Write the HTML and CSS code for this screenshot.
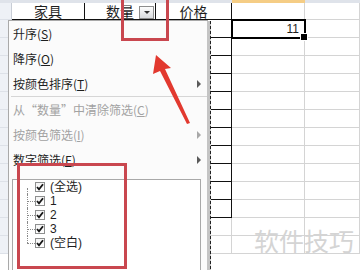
FILE: index.html
```html
<!DOCTYPE html>
<html lang="zh-CN">
<head>
    <meta charset="UTF-8">
    <meta name="viewport" content="width=device-width, initial-scale=1.0">
    <title>筛选</title>
    <link rel="stylesheet" href="styles.css">
</head>
<body>

    <div class="sheet">
        <div class="grid">
            <div class="band"></div><div class="band"></div><div class="band"></div><div class="band"></div><div class="band sel"></div><div class="band"></div>
            <div class="rh"></div><div class="k hd">家具</div><div class="k hd hd-filter">数量<span class="dd"></span></div><div class="k hd">价格</div><div class="g"></div><div class="g"></div>
            <div class="rh"></div><div class="k"></div><div class="k"></div><div class="k"></div><div class="g cur">11</div><div class="g"></div>
            <div class="rh"></div><div class="k"></div><div class="k"></div><div class="k"></div><div class="g"></div><div class="g"></div>
            <div class="rh"></div><div class="k"></div><div class="k"></div><div class="k"></div><div class="g"></div><div class="g"></div>
            <div class="rh"></div><div class="k"></div><div class="k"></div><div class="k"></div><div class="g"></div><div class="g"></div>
            <div class="rh"></div><div class="k"></div><div class="k"></div><div class="k"></div><div class="g"></div><div class="g"></div>
            <div class="rh"></div><div class="k"></div><div class="k"></div><div class="k"></div><div class="g"></div><div class="g"></div>
            <div class="rh"></div><div class="k"></div><div class="k"></div><div class="k"></div><div class="g"></div><div class="g"></div>
            <div class="rh"></div><div class="k"></div><div class="k"></div><div class="k"></div><div class="g"></div><div class="g"></div>
            <div class="rh"></div><div class="k"></div><div class="k"></div><div class="k"></div><div class="g"></div><div class="g"></div>
            <div class="rh"></div><div class="k"></div><div class="k"></div><div class="k"></div><div class="g"></div><div class="g"></div>
            <div class="rh"></div><div class="k"></div><div class="k"></div><div class="k"></div><div class="g"></div><div class="g"></div>
            <div class="rh"></div><div class="g"></div><div class="g"></div><div class="g"></div><div class="g"></div><div class="g"></div>
            <div class="rh"></div><div class="g"></div><div class="g"></div><div class="g"></div><div class="g"></div><div class="g"></div>
        </div>

        <!-- filter dropdown -->
        <div class="menu">
            <div class="item">升序(<u>S</u>)</div>
            <div class="item">降序(<u>O</u>)</div>
            <div class="item sub">按颜色排序(<u>T</u>)</div>
            <div class="sep"></div>
            <div class="item off">从“数量”中清除筛选(<u>C</u>)</div>
            <div class="item off sub">按颜色筛选(<u>I</u>)</div>
            <div class="item sub">数字筛选(<u>F</u>)</div>

            <div class="list">
                <div class="row"><span class="branch first"></span><span class="cb"><svg width="8" height="8" viewBox="0 0 8 8"><path d="M1 4 L3 6.3 L7 1.2" fill="none" stroke="#151515" stroke-width="1.8"/></svg></span><span class="lbl">(全选)</span></div>
                <div class="row"><span class="branch"></span><span class="cb"><svg width="8" height="8" viewBox="0 0 8 8"><path d="M1 4 L3 6.3 L7 1.2" fill="none" stroke="#151515" stroke-width="1.8"/></svg></span><span class="lbl">1</span></div>
                <div class="row"><span class="branch"></span><span class="cb"><svg width="8" height="8" viewBox="0 0 8 8"><path d="M1 4 L3 6.3 L7 1.2" fill="none" stroke="#151515" stroke-width="1.8"/></svg></span><span class="lbl">2</span></div>
                <div class="row"><span class="branch"></span><span class="cb"><svg width="8" height="8" viewBox="0 0 8 8"><path d="M1 4 L3 6.3 L7 1.2" fill="none" stroke="#151515" stroke-width="1.8"/></svg></span><span class="lbl">3</span></div>
                <div class="row"><span class="branch last"></span><span class="cb"><svg width="8" height="8" viewBox="0 0 8 8"><path d="M1 4 L3 6.3 L7 1.2" fill="none" stroke="#151515" stroke-width="1.8"/></svg></span><span class="lbl">(空白)</span></div>
            </div>
        </div>

        <!-- annotations -->
        <div class="mark mark-btn"></div>
        <div class="mark mark-list"></div>
        <svg class="arrow" width="360" height="270" viewBox="0 0 360 270">
            <polygon points="156,55 171,68 165,69 190,123 187,124 160,71 153,74" fill="#e2392f"/>
        </svg>
        <div class="watermark">软件技巧</div>
    </div>

</body>
</html>
```

FILE: styles.css
```css
* {
    margin: 0;
    padding: 0;
    box-sizing: border-box;
}

body {
    width: 360px;
    height: 270px;
    overflow: hidden;
    background: #fff;
    color: #1e1e1e;
    font-family: "Noto Sans CJK SC", sans-serif;
}

.sheet {
    position: relative;
    width: 360px;
    height: 270px;
}

/* Spreadsheet grid */
.grid {
    display: grid;
    grid-template-columns: 12px 73px 71px 76px 73px 55px;
    grid-template-rows: 3px 17px;
    grid-auto-rows: 18px;
}

.band {
    background: #dfe3ea;
}

.band.sel {
    background: #f5cd85;
}

.rh {
    background: #eef1f6;
    border-right: 1px solid #c8cdd6;
    border-bottom: 1px solid #dde1e8;
}

.g {
    border-right: 1px solid #d4d4d4;
    border-bottom: 1px solid #d4d4d4;
}

.k {
    border-right: 1px solid #111;
    border-bottom: 1px solid #111;
}

.hd {
    display: flex;
    align-items: center;
    justify-content: center;
    font-size: 14px;
    line-height: 16px;
}

.hd-filter {
    position: relative;
}

.dd {
    position: absolute;
    right: 1px;
    top: 3px;
    width: 15px;
    height: 13px;
    border: 1px solid #8d8d8d;
    background: linear-gradient(#fdfdfd, #d9dbde);
    display: flex;
    align-items: center;
    justify-content: center;
}

.dd::after {
    content: "";
    border-left: 3px solid transparent;
    border-right: 3px solid transparent;
    border-top: 3px solid #333;
}

.cur {
    position: relative;
    z-index: 1;
    outline: 2px solid #000;
    outline-offset: -1px;
    display: flex;
    align-items: center;
    justify-content: flex-end;
    padding-right: 5px;
    font: 12px "Liberation Sans", sans-serif;
}

.cur::after {
    content: "";
    position: absolute;
    right: -4px;
    bottom: -4px;
    width: 6px;
    height: 6px;
    background: #000;
    border: 1px solid #fff;
}

/* Filter menu */
.menu {
    position: absolute;
    z-index: 2;
    left: 8px;
    top: 20px;
    width: 200px;
    height: 260px;
    background: #fbfbfb;
    border: 1px solid #a9a9a9;
    font-size: 12px;
}

.menu::after {
    content: "";
    position: absolute;
    top: 0;
    bottom: 0;
    right: -4px;
    width: 3px;
    background: #c4c4c4;
    border-right: 1px dashed #222;
}

.item {
    position: relative;
    display: flex;
    align-items: center;
    height: 25px;
    padding-left: 4px;
    line-height: 14px;
    white-space: nowrap;
}

.item.off {
    color: #a2a2a2;
}

.sub::after {
    content: "";
    position: absolute;
    right: 6px;
    top: 50%;
    margin-top: -4px;
    border-top: 4px solid transparent;
    border-bottom: 4px solid transparent;
    border-left: 4px solid #5a5a5a;
}

.off.sub::after {
    border-left-color: #a8a8a8;
}

.sep {
    height: 1px;
    margin-left: 2px;
    background: #d6d6d6;
}

/* Value list */
.list {
    margin: 7px 6px 0 3px;
    height: 100px;
    border: 1px solid #a8a8a8;
    background: #fff;
    padding-left: 14px;
    font-family: "Liberation Sans", "Noto Sans CJK SC", sans-serif;
}

.row {
    display: flex;
    align-items: center;
    height: 14px;
}

.branch {
    position: relative;
    flex: none;
    width: 8px;
    height: 14px;
}

.branch::before {
    content: "";
    position: absolute;
    left: 0;
    top: 0;
    bottom: 0;
    border-left: 1px dotted #8a8a8a;
}

.branch::after {
    content: "";
    position: absolute;
    left: 0;
    right: 0;
    top: 7px;
    border-top: 1px dotted #8a8a8a;
}

.branch.first::before {
    top: 8px;
}

.branch.first::after {
    display: none;
}

.branch.last::before {
    bottom: 7px;
}

.cb {
    flex: none;
    width: 10px;
    height: 10px;
    border: 1px solid #8e8f8f;
    background: linear-gradient(#f4f4f4, #fff);
    display: flex;
    align-items: center;
    justify-content: center;
}

.lbl {
    margin-left: 5px;
    font-size: 12px;
    line-height: 13px;
}

/* Annotations */
.mark {
    position: absolute;
    z-index: 3;
    border: 3px solid #c9474f;
}

.mark-btn {
    left: 121px;
    top: -3px;
    width: 48px;
    height: 44px;
}

.mark-list {
    left: 17px;
    top: 163px;
    width: 110px;
    height: 106px;
}

.arrow {
    position: absolute;
    z-index: 3;
    left: 0;
    top: 0;
}

.watermark {
    position: absolute;
    left: 254px;
    top: 225px;
    font-size: 25px;
    line-height: 30px;
    color: #d4d4d4;
}
```
